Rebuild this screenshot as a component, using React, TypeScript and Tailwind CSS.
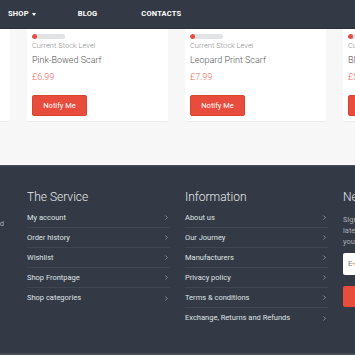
import { ChevronRight } from 'lucide-react';

const products = [
  { name: 'Pastel Knit Scarf', price: '£5.99' },
  { name: 'Pink-Bowed Scarf', price: '£6.99' },
  { name: 'Leopard Print Scarf', price: '£7.99' },
  { name: 'Blue Check Scarf', price: '£5.99' },
];

const service = ['My account', 'Order history', 'Wishlist', 'Shop Frontpage', 'Shop categories'];
const info = ['About us', 'Our Journey', 'Manufacturers', 'Privacy policy', 'Terms & conditions', 'Exchange, Returns and Refunds'];

function LinkList({ title, items }: { title: string; items: string[] }) {
  return (
    <div className="w-[143px] shrink-0">
      <h3 className="text-[12px] leading-[14px] font-light text-[#e6e8eb] mb-[4px]">{title}</h3>
      <ul className="divide-y divide-[#3e4551]">
        {items.map((item) => (
          <li key={item} className="h-[20px] flex items-center justify-between text-[7.5px] text-[#dfe2e6]">
            <span>{item}</span>
            <ChevronRight className="w-[7px] h-[7px] text-[#9aa1ab]" strokeWidth={2.5} />
          </li>
        ))}
      </ul>
    </div>
  );
}

export default function App() {
  return (
    <div className="w-[355px] h-[355px] overflow-hidden bg-[#f7f7f7] font-['Roboto',sans-serif]">
      {/* nav */}
      <nav className="h-[29px] bg-[#343a45] flex items-center text-[7.5px] font-bold text-white tracking-wide border-b border-[#2a2f38]">
        <span className="ml-[8px] flex items-center gap-[3px]">
          SHOP
          <span className="w-0 h-0 border-l-[2.5px] border-r-[2.5px] border-t-[3px] border-l-transparent border-r-transparent border-t-white" />
        </span>
        <span className="ml-[42px]">BLOG</span>
        <span className="ml-[44px]">CONTACTS</span>
      </nav>

      {/* products */}
      <div className="h-[136px] overflow-hidden">
        <div className="flex gap-[17px] ml-[-131px]">
          {products.map((p) => (
            <div key={p.name} className="w-[141px] shrink-0 h-[93px] bg-white border-b border-[#ebebeb] rounded-b-[2px] px-[5px] pt-[5px]">
              <div className="w-[33px] h-[5px] rounded-full bg-[#e1e3e4] overflow-hidden">
                <div className="w-[5px] h-full bg-[#e74c3c] rounded-full" />
              </div>
              <p className="mt-[1px] text-[7.5px] leading-[11px] font-light text-[#8d8d8d]">Current Stock Level</p>
              <p className="mt-[3px] text-[9px] leading-[12px] font-light text-[#555]">{p.name}</p>
              <p className="mt-[5px] text-[9px] leading-[12px] font-light text-[#ec6b5e]">{p.price}</p>
              <button className="mt-[12px] w-[55px] h-[21px] bg-[#e74c3c] text-white text-[7.5px] rounded-[2px] border border-[#d84334]">
                Notify Me
              </button>
            </div>
          ))}
        </div>
      </div>

      {/* footer */}
      <footer className="h-[188px] bg-[#343a45] border-t border-[#4a505a] pt-[24px] overflow-hidden">
        <div className="flex gap-[15px] ml-[-131px]">
          <div className="w-[143px] shrink-0 pt-[28px] pr-[8px] text-[7.5px] leading-[11px] text-[#a9aeb5] text-right">
            <p>Handmade in Scotland</p>
          </div>
          <LinkList title="The Service" items={service} />
          <LinkList title="Information" items={info} />
          <div className="w-[143px] shrink-0">
            <h3 className="text-[12px] leading-[14px] font-light text-[#e6e8eb] mb-[10px]">Newsletter</h3>
            <p className="text-[7.5px] leading-[11px] text-[#a9aeb5]">
              Sign up to our newsletter and receive the latest designs and special offers directly to your inbox.
            </p>
            <div className="mt-[6px] h-[22px] bg-white rounded-[2px] flex items-center px-[5px] text-[7.5px] text-[#777]">
              E-mail address
            </div>
            <div className="mt-[11px] h-[21px] bg-[#e74c3c] rounded-[2px]" />
          </div>
        </div>
      </footer>
      <div className="h-[2px] bg-[#474d57]" />
    </div>
  );
}
